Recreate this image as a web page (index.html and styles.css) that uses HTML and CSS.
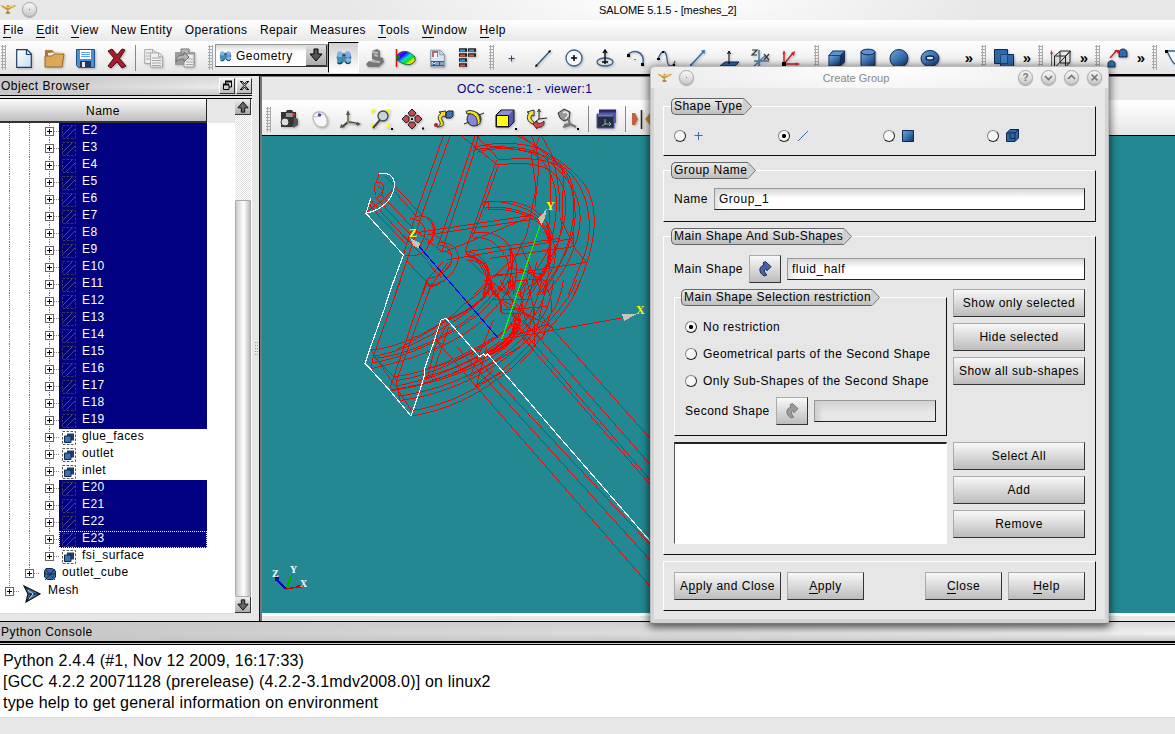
FILE: index.html
```html
<!DOCTYPE html>
<html lang="en">
<head>
<meta charset="utf-8">
<title>SALOME 5.1.5 - [meshes_2]</title>
<link rel="stylesheet" href="styles.css">
</head>
<body>
<svg class="defs" width="0" height="0">
  <defs>
    <linearGradient id="blue" x1="0" y1="0" x2="1" y2="1"><stop offset="0" stop-color="#6fa3dc"/><stop offset=".5" stop-color="#3a73b4"/><stop offset="1" stop-color="#14305a"/></linearGradient>
    <linearGradient id="sheet" x1="0" y1="0" x2="1" y2="1"><stop offset="0" stop-color="#fff"/><stop offset="1" stop-color="#c6dcf4"/></linearGradient>
    <linearGradient id="rain" x1="0" y1="0" x2="1" y2="1"><stop offset="0" stop-color="#f0f"/><stop offset=".3" stop-color="#20f"/><stop offset=".5" stop-color="#0dd"/><stop offset=".65" stop-color="#1d1"/><stop offset=".8" stop-color="#fe0"/><stop offset="1" stop-color="#f20"/></linearGradient>
    <symbol id="lamp" viewBox="0 0 16 12"><path d="M0 2l4 1 3 .3V2h2v1.200l5-1 2-.2-1 1.500-5 2.500-1.500 1v1.500l2 1H5l2-1v-1.500L3.500 5z" fill="#c8962c"/><path d="M4 3.700l5 .6 5-1.500" stroke="#f6e08a" fill="none"/><path d="M6 10h4" stroke="#6a4a14" fill="none"/></symbol>
    <symbol id="edge" viewBox="0 0 14 14"><path d="M.5.5h13v13H.5z" fill="none" stroke="#3c3c5a" stroke-dasharray="2.500 1.500"/><path d="M1 10L10 1M4 13L13 4" stroke="#4a4a88" fill="none"/></symbol>
    <symbol id="face" viewBox="0 0 14 14"><path d="M.5.5h13v13H.5z" fill="#fff" stroke="#555" stroke-dasharray="2.500 1.500"/><path d="M5 2.500h7v7H5z" fill="#1d3f6b"/><path d="M2.500 5h6.500v6.500h-6.500z" fill="#3a73b4" stroke="#13294a"/></symbol>
    <symbol id="molecule" viewBox="0 0 20 18"><path d="M3 3l5 1h4l5-1 2 6-2 7-4 1-3-3-3 3-4-1-2-7z" fill="#4386a8"/><circle cx="5" cy="5" r="3.500" fill="#7fb6dc"/><circle cx="14.500" cy="5" r="3.500" fill="#86a6ee"/><circle cx="5" cy="12.500" r="3.200" fill="#3f94b4"/><circle cx="15" cy="12.500" r="3.200" fill="#82b4d8"/><path d="M2 15c2 3 5 1 6-1M12 14c1 3 5 3 6 0M8 6h4" stroke="#173a52" stroke-width="1.500" fill="none"/></symbol>
    <symbol id="curl" viewBox="0 0 14 17"><path d="M5.500 16C0 13-1 6 5 4.500L4.500 1.500 7 .5 13 6 8.500 10.500 7.500 8C5 9 5.500 12 8.500 15z"/></symbol>
    <symbol id="cube" viewBox="0 0 20 20"><path d="M1.500 6.500L6 1.500h13v12.500l-5 4.500H1.500z" fill="#16345e"/><path d="M2.500 6.200L6.500 2.500h11.500l-4 3.700z" fill="#5b94d4"/><path d="M2.500 7.200h11v10.300h-11z" fill="url(#blue)"/></symbol>
    <symbol id="page" viewBox="0 0 16 19"><path d="M.7.700h10.300l4.300 4.300v13.300H.700z"/><path d="M10.500 1v4.500h4.500" fill="none"/></symbol>
  </defs>
</svg>

<div class="app">
  <header class="titlebar">
    <svg class="lamp" width="16" height="12"><use href="#lamp"/></svg>
    <span class="round"><i></i></span>
    <span class="caption">SALOME 5.1.5 - [meshes_2]</span>
  </header>

  <nav class="menu">
    <span><u>F</u>ile</span><span><u>E</u>dit</span><span><u>V</u>iew</span><span>New Entity</span><span>Operations</span><span>Repair</span><span>Measures</span><span><u>T</u>ools</span><span><u>W</u>indow</span><span><u>H</u>elp</span>
  </nav>

  <div class="toolbar">
    <i class="grip first"></i>
    <svg class="tb" viewBox="0 0 31 32"><g transform="translate(8 7)" fill="url(#sheet)" stroke="#1c3f6c" stroke-width="1.200"><use href="#page" width="16" height="19"/></g></svg>
    <svg class="tb" viewBox="0 0 31 32"><path d="M6 8h7l2 2h8v5H6z" fill="#a87a3c"/><path d="M9 11l14-1v8H9z" fill="#f4f0e4"/><path d="M6 14h7l2-2h10l-2 13H6z" fill="#dca858" stroke="#966a30"/></svg>
    <svg class="tb" viewBox="0 0 31 32"><path d="M6.500 7.500h18v18h-16l-2-2z" fill="#4d8fd2" stroke="#1f4f8c"/><path d="M10 8h11v9H10z" fill="#fff"/><path d="M11 10.500h9M11 12.500h9M11 14.500h9" stroke="#5aa0ee"/><path d="M10 19h11v6H10z" fill="#1b3864"/><path d="M12 20h3v5h-3z" fill="#e8e8e8"/></svg>
    <svg class="tb" viewBox="0 0 31 32"><path d="M7 9l4-2 5 6 5-6 3 1-5.500 8.500L25 24l-4 2-5-6-6 6-3-2 6-8z" fill="#a81d2c" stroke="#4c0a12"/></svg>
    <i class="rule"></i>
    <svg class="tb dim" viewBox="0 0 31 32"><g fill="#f2f2f2" stroke="#888"><use href="#page" x="6" y="7" width="13" height="15"/><use href="#page" x="12" y="10" width="13" height="16"/></g><path d="M8 11h5M8 14h4M8 17h4M14 16h9M14 18.500h9M14 21h9M14 23.500h9" stroke="#999"/></svg>
    <svg class="tb dim" viewBox="0 0 31 32"><path d="M6 10h20v13H6z" fill="#8d8d8d"/><path d="M12 7h8v5h-8z" fill="#aaa" stroke="#666"/><path d="M15 12h10v13H15z" fill="#eee" stroke="#888"/><path d="M7 20c0-6 4-7 8-7v-3l5 5-5 5v-3c-3 0-5 0-8 3z" fill="#aaa" stroke="#555"/><path d="M19 17h5M17 20h7M17 22.500h7" stroke="#999"/></svg>
    <i class="grip g1"></i>
    <div class="combo"><svg width="13" height="12"><use href="#molecule"/></svg><span>Geometry</span><b><svg width="14" height="14" viewBox="0 0 14 14"><path d="M5 1h4v5h4L7 13 1 6h4z" fill="#555" stroke="#000"/></svg></b></div>
    <span class="pressed"><svg width="18" height="15"><use href="#molecule"/></svg></span>
    <svg class="tb" viewBox="0 0 31 32"><path d="M7 22l3-3 4 1 2-2-3-1V9l5-2 3 2v6l3 1 1 4-5 5H9z" fill="#777"/><path d="M13 10l6 1M12 19l9 1M15 13l4 1" stroke="#bbb" stroke-width="2"/></svg>
    <svg class="tb" viewBox="0 0 31 32"><path d="M7 13C13 7 19 9 25 15v4c-5 6-11 4-18-1z" fill="url(#rain)" stroke="#164"/><path d="M6.500 7v18" stroke="#d11" stroke-width="1.500"/><path d="M6 15h4" stroke="#080" stroke-width="3"/></svg>
    <svg class="tb" viewBox="0 0 31 32"><g fill="#dbe4ee" stroke="#8292a4"><use href="#page" x="9" y="7" width="15" height="19"/></g><path d="M11 9h6v6h-6z" fill="#b66"/><path d="M13 11h3v5h-3z" fill="#fff"/><path d="M10 19h13v5H10z" fill="#2c5c94"/><path d="M11 23v-3l2 2 2-2v3M17 20v3M20 20v3M22 20v3" stroke="#dfe9f5" fill="none"/></svg>
    <svg class="tb" viewBox="0 0 31 32"><path d="M7 8h8M7 13h8M7 18h8M7 23h8M16 8h8M16 13h8" stroke="#222" stroke-width="3.600"/><path d="M8 8.500h5M17 8.500h5M8 18.500h5" stroke="#3a9be0" stroke-width="1.800"/><path d="M8 13.500h5M17 13.500h5M8 23.500h5" stroke="#e0504a" stroke-width="1.800"/></svg>
    <i class="grip g2"></i>
    <svg class="tb" viewBox="0 0 31 32"><path d="M15.500 13.500v6M12.500 16.500h6" stroke="#334b78"/></svg>
    <svg class="tb" viewBox="0 0 31 32"><path d="M9 24L23 9" stroke="#2c568c" stroke-width="1.300"/><path d="M8 25l3-1-2-2zM24 8l-3 1 2 2z"/></svg>
    <svg class="tb" viewBox="0 0 31 32"><circle cx="16" cy="16" r="8" fill="#f6f8fc" stroke="#35608f" stroke-width="1.300"/><path d="M16 13v6M13 16h6" stroke="#000" stroke-width="1.500"/></svg>
    <svg class="tb" viewBox="0 0 31 32"><ellipse cx="16" cy="20" rx="8" ry="4" fill="none" stroke="#35608f" stroke-width="1.300"/><path d="M16 9v13M14 11l2-3 2 3M13 20h6" stroke="#000" stroke-width="1.300" fill="none"/></svg>
    <svg class="tb" viewBox="0 0 31 32"><path d="M8 13c4-6 17-5 15 9" stroke="#35608f" stroke-width="1.500" fill="none"/><path d="M7 12h3v3H7zM21 21h3v3h-3zM14.500 17h1v1h-1z"/></svg>
    <svg class="tb" viewBox="0 0 31 32"><path d="M7 17c4-10 8-10 9 0s6 8 8 2" stroke="#35608f" stroke-width="1.300" fill="none"/><path d="M6 16h3v2H6zM11 9h2v2h-2zM22 22h2v2h-2z"/></svg>
    <svg class="tb" viewBox="0 0 31 32"><path d="M9 23L22 9" stroke="#2f6fb0" stroke-width="1.500"/><path d="M19 8.500l4-.5-.5 4z" fill="#2f6fb0"/><path d="M8 22h2v2H8z" fill="#2f6fb0"/></svg>
    <svg class="tb" viewBox="0 0 31 32"><path d="M7 24l5-4h14l-4 4z" fill="#2d67a8" stroke="#122c50"/><path d="M16 10v12M14.500 12l1.500-3 1.500 3" stroke="#000" fill="none"/></svg>
    <svg class="tb" viewBox="0 0 31 32"><path d="M8 8h5l-5 5h5M20 12l5 6M25 12l-5 6" stroke="#333" fill="none" stroke-width="1.200"/><path d="M15 8v18M10 19h15M9 25l12-11" stroke="#4a78a8" stroke-width="1.500"/></svg>
    <svg class="tb" viewBox="0 0 31 32"><path d="M9 22V11M9 22h13M9 22l9-11" stroke="#c22" stroke-width="1.500"/><path d="M7.500 12L9 8l1.500 4zM21 20.500l4 1.500-4 1.500zM16 11l4-2-1 5z" fill="#c22"/><path d="M7 20h4v4H7z"/></svg>
    <i class="grip g3"></i>
    <svg class="tb" viewBox="0 0 31 32"><use href="#cube" x="6" y="7" width="19" height="19"/></svg>
    <svg class="tb" viewBox="0 0 31 32"><path d="M9 10v13c1 4 13 4 14 0V10z" fill="url(#blue)" stroke="#12284a"/><ellipse cx="16" cy="10" rx="7" ry="2.800" fill="#5b93d2" stroke="#12284a"/></svg>
    <svg class="tb" viewBox="0 0 31 32"><circle cx="16" cy="16.500" r="9" fill="url(#blue)" stroke="#12284a"/></svg>
    <svg class="tb" viewBox="0 0 31 32"><ellipse cx="16" cy="16.500" rx="9" ry="8" fill="url(#blue)" stroke="#12284a"/><ellipse cx="16" cy="16" rx="4" ry="2" fill="#dfe6ee" stroke="#12284a" stroke-width="1.500"/></svg>
    <span class="more m1">»</span>
    <i class="grip g4"></i>
    <svg class="tb" viewBox="0 0 31 32"><path d="M6.500 7.500h13v5h6v14h-13v-5h-6z" fill="#2d69ab" stroke="#12284a"/><path d="M12.500 21.500v-9h7v9z" fill="#3f7fc2" stroke="#1d4578"/></svg>
    <span class="more m2">»</span>
    <i class="grip g4"></i>
    <svg class="tb" viewBox="0 0 31 32"><path d="M9.500 14h11v12h-11zM9.500 14l6-5h10l-5 5M25 9v11l-5 6M15 9v12h10M9.500 26l16-17" stroke="#222" fill="none"/><path d="M6.500 25V11" stroke="#d33"/><path d="M5 12l1.500-4L8 12z" fill="#d33"/></svg>
    <span class="more m2">»</span>
    <i class="grip g4"></i>
    <svg class="tb" viewBox="0 0 31 32"><path d="M6 25v-4c1-3 6-3 7 0v4zM17 15v-5c1-4 7-4 8 0v5z" fill="#2d69ab" stroke="#12284a"/><path d="M8 16l7-8" stroke="#c22" stroke-width="1.500"/><path d="M12 8h5v4z" fill="#c22"/></svg>
    <span class="more m2">»</span>
    <i class="grip g4"></i>
    <svg class="tb" viewBox="0 0 31 32"><path d="M8 9h20l-3 14c-9 3-12-3-17-14z" fill="#f5f7fb" stroke="#35608f" stroke-width="1.300"/><path d="M6 8h3v3H6z"/></svg>
  </div>

  <main class="work">
    <section class="browser">
      <div class="docktitle"><span>Object Browser</span>
        <b class="sq"><svg width="11" height="11" viewBox="0 0 11 11"><path d="M3.500 4V1.500h6V7H7" stroke="#000" fill="none"/><path d="M3 1.500h7M1 4.500h6" stroke="#000" stroke-width="2"/><path d="M1.500 4.500h5.500v5H1.500z" fill="none" stroke="#000"/></svg></b>
        <b class="sq"><svg width="11" height="11" viewBox="0 0 11 11"><path d="M1 1.500h2.500L5.500 4l2-2.500H10M1 9.500h2.500l2-2.500 2 2.500H10M2 2l3 3.500L2 9M9 2L6 5.500 9 9" stroke="#000" fill="none"/></svg></b>
      </div>
      <div class="treewrap">
        <div class="tree">
          <div class="thead">Name</div>
          <ul>
            <li class="sel"><i></i><i></i><i class="p"></i><span><svg><use href="#edge"/></svg>E2</span></li>
            <li class="sel"><i></i><i></i><i class="p"></i><span><svg><use href="#edge"/></svg>E3</span></li>
            <li class="sel"><i></i><i></i><i class="p"></i><span><svg><use href="#edge"/></svg>E4</span></li>
            <li class="sel"><i></i><i></i><i class="p"></i><span><svg><use href="#edge"/></svg>E5</span></li>
            <li class="sel"><i></i><i></i><i class="p"></i><span><svg><use href="#edge"/></svg>E6</span></li>
            <li class="sel"><i></i><i></i><i class="p"></i><span><svg><use href="#edge"/></svg>E7</span></li>
            <li class="sel"><i></i><i></i><i class="p"></i><span><svg><use href="#edge"/></svg>E8</span></li>
            <li class="sel"><i></i><i></i><i class="p"></i><span><svg><use href="#edge"/></svg>E9</span></li>
            <li class="sel"><i></i><i></i><i class="p"></i><span><svg><use href="#edge"/></svg>E10</span></li>
            <li class="sel"><i></i><i></i><i class="p"></i><span><svg><use href="#edge"/></svg>E11</span></li>
            <li class="sel"><i></i><i></i><i class="p"></i><span><svg><use href="#edge"/></svg>E12</span></li>
            <li class="sel"><i></i><i></i><i class="p"></i><span><svg><use href="#edge"/></svg>E13</span></li>
            <li class="sel"><i></i><i></i><i class="p"></i><span><svg><use href="#edge"/></svg>E14</span></li>
            <li class="sel"><i></i><i></i><i class="p"></i><span><svg><use href="#edge"/></svg>E15</span></li>
            <li class="sel"><i></i><i></i><i class="p"></i><span><svg><use href="#edge"/></svg>E16</span></li>
            <li class="sel"><i></i><i></i><i class="p"></i><span><svg><use href="#edge"/></svg>E17</span></li>
            <li class="sel"><i></i><i></i><i class="p"></i><span><svg><use href="#edge"/></svg>E18</span></li>
            <li class="sel"><i></i><i></i><i class="p"></i><span><svg><use href="#edge"/></svg>E19</span></li>
            <li><i></i><i></i><i class="p"></i><span><svg><use href="#face"/></svg>glue_faces</span></li>
            <li><i></i><i></i><i class="p"></i><span><svg><use href="#face"/></svg>outlet</span></li>
            <li><i></i><i></i><i class="p"></i><span><svg><use href="#face"/></svg>inlet</span></li>
            <li class="sel"><i></i><i></i><i class="p"></i><span><svg><use href="#edge"/></svg>E20</span></li>
            <li class="sel"><i></i><i></i><i class="p"></i><span><svg><use href="#edge"/></svg>E21</span></li>
            <li class="sel"><i></i><i></i><i class="p"></i><span><svg><use href="#edge"/></svg>E22</span></li>
            <li class="sel focus"><i></i><i></i><i class="p"></i><span><svg><use href="#edge"/></svg>E23</span></li>
            <li><i></i><i></i><i class="p end"></i><span><svg><use href="#face"/></svg>fsi_surface</span></li>
            <li class="lv2"><i></i><i class="p end"></i><span><svg viewBox="0 0 14 14"><path d="M3 1.500h6.500l3 2.500v6l-2.500 2.500H4.500l-3-2.500V4z" fill="#3568a4" stroke="#14294a"/><path d="M2 2l10 11M12 2L2 13M1 7h12" stroke="#14294a"/></svg>outlet_cube</span></li>
            <li class="lv1"><i class="p end"></i><span><svg viewBox="0 0 18 18"><path d="M1 1l16 8L3 17l2-8z" fill="#4a78b4" stroke="#111" stroke-width="1.200"/><path d="M1 1l8 7-5 8M5 9h12" stroke="#111" fill="none"/><path d="M5 5l5 4-4 5" stroke="#cde" fill="none"/></svg>Mesh</span></li>
          </ul>
        </div>
        <div class="scroll"><b class="up"><svg width="12" height="12" viewBox="0 0 14 14"><path d="M5 13h4V8h4L7 1 1 8h4z" fill="#666" stroke="#000"/></svg></b><i></i><b><svg width="12" height="12" viewBox="0 0 14 14"><path d="M5 1h4v5h4L7 13 1 6h4z" fill="#666" stroke="#000"/></svg></b></div>
      </div>
    </section>
    <div class="splitter"><i></i><i></i></div>

    <section class="view">
      <div class="vtitle"><span>OCC scene:1 - viewer:1</span></div>
      <div class="vbar">
        <i class="grip v"></i>
        <svg class="tb" viewBox="0 0 31 32"><path d="M8 9h5l1-2h5l1 2h3v12l-4 3H8z" fill="#333"/><circle cx="12" cy="19" r="4" fill="#ddd" stroke="#333"/><path d="M13 10h7v4h-7z" fill="#999"/><path d="M19 11.500h3" stroke="#e33" stroke-width="2"/><path d="M21 14l4 2v6l-5 3" fill="#555"/></svg>
        <svg class="tb" viewBox="0 0 31 32"><path d="M9 15c0-7 9-8 12-3 4 5 3 12-3 12-5 0-8-3-9-9z" fill="#f8f8f8" stroke="#bbb" stroke-width="1.300"/><path d="M10 14c4 0 8-2 10-4M14 8l2 4" stroke="#bbb" fill="none"/><circle cx="15.500" cy="12" r="1.700" fill="#35599a"/></svg>
        <svg class="tb" viewBox="0 0 31 32"><path d="M13 9v10l-6 5M13 19l11 2" stroke="#444" stroke-width="2" fill="none"/><path d="M13 10v10l8 1" stroke="#c9c08c" fill="none"/><path d="M11 12l2-5 2 5zM22 19l4 2-4 2zM6 21l-1 4 5-1z" fill="#555"/></svg>
        <svg class="tb" viewBox="0 0 31 32"><path d="M6 10V7h3M19 7h4v4M6 20v4h4M20 24h3v-4" stroke="#ff0" stroke-width="1.500" fill="none"/><path d="M7 25l7-8" stroke="#444" stroke-width="2"/><circle cx="17" cy="13" r="5" fill="#c5d7dc" stroke="#444" stroke-width="1.300"/><path d="M25 26h2" stroke="#000" stroke-width="2"/></svg>
        <svg class="tb" viewBox="0 0 31 32"><path d="M15 6l4 4-2 3h-4l-2-3zM15 26l4-4-2-3h-4l-2 3zM5 16l4-4 3 2v4l-3 2zM25 16l-4-4-3 2v4l3 2z" fill="#be4c52" stroke="#222"/><path d="M15 15v2M25 25.500h2" stroke="#111" stroke-width="2"/></svg>
        <svg class="tb" viewBox="0 0 31 32"><path d="M9 24c8 0 7-4 5-7-1-2 0-3 1-4l2 1 1-6-7 1 2 1c-4 4-3 6-1 9 1 3-1 4-3 5z" fill="#f3e11c" stroke="#333"/><path d="M18 10l2-2h5v5l-2 2h-5z" fill="#3b76b0" stroke="#123"/><circle cx="8" cy="22" r="2" fill="#b22"/></svg>
        <svg class="tb" viewBox="0 0 31 32"><circle cx="15" cy="16" r="7" fill="#8486d8" stroke="#223"/><path d="M5 21l5-2M20 12l5-2" stroke="#222"/><path d="M7 8.500l3-1c8 0 12 5 11 13l-3 2c1-7-1-11-8-12l-2 .5z" fill="#f1df22" stroke="#333"/></svg>
        <svg class="tb" viewBox="0 0 31 32"><path d="M6 12l5-5h13v12l-5 5H6z" fill="#555cae" stroke="#111"/><path d="M6.500 12.500h12v11h-12z" fill="#ffff18" stroke="#111"/><path d="M7 12l5-4.500h11l-4 4.500z" fill="#8a90d8"/><path d="M25 26h2" stroke="#000" stroke-width="2"/></svg>
        <svg class="tb" viewBox="0 0 31 32"><path d="M12 21c-6-2-7-7-4-11l-2-1 7-2v6l-2-1c-2 3-1 5 2 7z" fill="#f2e13a" stroke="#333"/><path d="M12 21l4-3v2c3 1 5 0 7-2 1 5-3 7-7 6v2z" fill="#d5484c" stroke="#522"/><path d="M18 8v8l8-1M18 16l-4 3M16.500 9L18 6l1.500 3" stroke="#222" fill="none"/></svg>
        <svg class="tb" viewBox="0 0 31 32"><path d="M6 10l6-4 6 3-1 7-5 2-4-3z" fill="#999" stroke="#333"/><path d="M11 10a3 3 0 1 1 2 5" stroke="#eee" fill="none" stroke-width="1.500"/><path d="M16 14l2 8M12 22l6-1 6 3M11 24l7-2" stroke="#777" stroke-width="2.200" fill="none"/><path d="M25 26h2" stroke="#000" stroke-width="2"/></svg>
        <i class="rule vr"></i>
        <svg class="tb" viewBox="0 0 31 32"><path d="M8 7h17v13H8z" fill="#5358b0"/><path d="M8 8h17" stroke="#272a70" stroke-width="3"/><path d="M6 11h17v14H6z" fill="#242e3c" stroke="#5358b0"/><path d="M7 12.500h15" stroke="#7478d0" stroke-width="2"/><path d="M14 16v5l6 0M14 21l-3 2M18 19l2 2-2 2" stroke="#7db6c4" fill="none"/></svg>
        <i class="rule vr2"></i>
        <svg class="tb" viewBox="0 0 31 32"><path d="M5 10h3l3 6-3 6H5z" fill="#c4603c"/><path d="M14.500 7v19" stroke="#222" stroke-width="1.500"/><path d="M24 9l-6 7 6 7z" fill="#c89030"/></svg>
      </div>
      <svg class="scene" viewBox="0 0 913 477" shape-rendering="crispEdges">
        <!-- upper half of the wireframe -->
        <g class="wire" transform="translate(98 -1) scale(.33333)">
          <path d="M250 3L165 245L130 360M270 3L182 250L140 378L105 480M345 3L232 340M355 3L340 60L245 350M305 3L415 92M350 3L415 72M410 75L365 205L315 350M415 92L355 260L335 310M250 380L205 430L188 480M262 385L215 450L203 480"/>
          <path d="M338 40C380 20 520 15 570 60S610 100 607 230 560 400 500 480M340 46C400 30 520 40 545 75S600 150 585 260 530 400 470 480M350 52C420 28 560 45 600 95S650 200 635 280 590 410 535 480M375 32C450 40 520 30 560 75 620 120 665 180 660 260S600 440 550 480"/>
          <path d="M415 75C480 68 560 68 600 95S640 160 645 230 600 400 545 480M412 90C500 80 560 85 595 130S620 260 590 330 520 450 480 480"/>
          <path d="M475 3C560 50 640 100 675 150 720 220 712 340 640 480M485 3C560 60 610 90 640 125 690 190 705 290 665 380L625 480M545 3C560 30 575 60 600 100M540 3L515 60C520 130 535 150 520 200L500 300L440 420M515 3C550 80 530 130 525 215M560 60C580 130 570 210 565 300M580 75C600 160 600 210 598 230"/>
          <path d="M365 205C430 190 490 200 530 230S580 300 585 350 560 430 530 480M370 200C440 195 500 215 540 250M378 218C430 212 480 225 520 245S565 300 572 345 550 420 510 480M385 225C450 218 510 240 545 270 580 320 580 400 545 480M365 205L378 225M385 205L385 225"/>
          <path d="M175 292L520 240M200 300L540 250M260 375L640 310M320 350L600 310M390 370L640 335M395 425L680 382M255 350L500 250M600 250L645 340L680 382M640 290L640 335"/>
          <path d="M335 295C380 285 430 300 450 335S450 420 440 480M340 310C380 300 420 330 440 370S420 440 415 480M315 350C350 350 385 375 388 420L370 480M315 365C350 365 380 385 392 425L385 480M325 378C360 372 390 400 375 460M320 370L390 435L440 480M340 360L410 470"/>
          <path class="thick" d="M318 355C350 375 388 380 385 430L370 480M390 430L400 480M560 270C585 330 565 400 540 430"/>
          <path d="M395 440L440 475M500 430L470 475M450 400L555 420M445 440L540 432M470 410L460 480M510 390L490 480M530 380L510 480M570 310L560 400L520 450"/>
          <path d="M58 115L42 160L48 180M45 145C60 135 75 150 70 165L50 190M55 155C70 158 75 172 60 185M75 122L185 240M100 165L170 245M60 175L165 285M45 185L150 298M32 195L145 320M25 208L140 330M18 235C40 210 75 200 100 160M35 188C20 210 40 230 55 223"/>
          <path d="M165 245C205 235 225 260 225 290L205 330M182 243C215 245 230 280 215 320M150 250C190 255 215 285 175 340M130 300L200 375M160 280L245 350M215 290L270 340M140 378L210 450M135 360C170 370 210 350 205 320"/>
          <path d="M232 325C275 315 295 345 295 370S260 445 215 455L195 440M240 350C280 345 280 370 270 390S230 430 200 430M240 330C290 345 285 385 240 420M200 380L245 430M340 480L450 380M440 340C480 370 480 430 445 480M450 340L460 480M395 425C440 405 470 430 440 480M480 330L550 480M480 400L560 440"/>
        </g>
        <!-- lower half of the wireframe and the long ducts -->
        <g class="wire" transform="translate(98 144) scale(.33333)">
          <path d="M122 0L40 228L32 268M200 0L88 330M215 10L108 305M195 10L210 20L255 0M15 250L32 268M32 210L155 392M40 228L110 300M88 330L153 408M108 300L120 362M265 125L225 200L200 300M267 140L215 290M243 118L228 185M230 183L250 195"/>
          <path d="M32 210C130 205 270 120 300 85S375 40 385 0M40 228C150 215 270 130 310 105S385 40 395 0M45 235C180 220 300 140 350 95L430 10M32 250C180 225 310 140 370 90L450 0M32 266C220 225 330 165 400 90L470 0M110 210L300 100"/>
          <path d="M100 290C210 280 330 215 400 175S480 90 500 0M108 302C230 285 350 215 420 165S500 80 520 0M90 330C240 310 360 250 440 180S530 70 545 0M95 332C230 310 370 265 450 190S550 70 565 0M118 348C250 330 380 270 460 200S570 100 580 0M115 362C260 345 400 275 490 190S600 70 610 0M108 318C220 300 370 230 440 180"/>
          <path d="M155 392C300 370 430 285 510 190S630 60 650 0M153 408C310 385 440 290 520 200S640 65 662 0M200 265C280 250 350 215 400 170M195 290C280 270 350 235 420 185M215 300C320 275 420 215 480 150"/>
          <path class="thick" d="M260 120C300 105 350 80 385 35M375 0L420 60L425 100M385 225C440 205 475 165 480 115M380 218C440 190 465 160 468 110M455 100L480 125L450 170M200 295L215 290M370 50L395 20M395 215L450 170"/>
          <path d="M400 40L545 180M425 60L580 145M430 90L560 80M425 100L500 100M400 60L510 60M540 0C580 40 580 90 570 105L545 180M500 0L525 100L490 180M560 10L530 150M480 30L500 140M450 80L530 120M420 20L540 150M470 165L570 130M440 0L490 60L475 110M420 0L460 70M400 120L330 290M380 200L350 315M330 230L440 150M330 290L480 200M350 315L430 275M345 320L400 270M460 120L520 210L480 250M520 80L525 200"/>
          <path d="M425 178L790 113M230 183L870 918M290 200L870 840M345 230L870 793M450 130L870 613M460 120L870 600M490 120L870 553M540 105L870 475"/>
        </g>
        <g class="edge" transform="translate(98 -1) scale(.33333)">
          <path d="M58 115C95 112 105 130 103 155C95 200 60 225 18 235L130 360L86 480M18 235L32 190"/>
          <path d="M101 435L72 525L30 640L15 685L32 703L88 765L153 843L180 765L192 725L195 697L220 625L243 555L258 550L358 665L370 657L376 663L383 657L580 885L870 1218"/>
          <path class="bl" d="M178 335L415 610"/>
          <path class="gr" d="M540 270L425 613"/>
          <path class="cone" d="M560 222L535 250L545 270L555 250zM150 308L160 332L175 340L180 325zM785 538H830L793 557z"/>
        </g>
        <g class="axis"><text x="147" y="101">Z</text><text x="284" y="74">Y</text><text x="374" y="178">X</text></g>
        <path d="M24 453L14 443" stroke="#00b" stroke-width="2"/><path d="M13 441h4v4h-4z" fill="#00a"/><path d="M25 452L29 440" stroke="#0a0" stroke-width="2"/><path d="M24 453L41 450" stroke="#c00" stroke-width="1.500"/><path d="M35 450h5" stroke="#d00" stroke-width="3"/>
        <g class="axis w"><text x="10" y="441">Z</text><text x="28" y="437">Y</text><text x="38" y="451">X</text></g>
      </svg>
    </section>
  </main>

  <section class="console">
    <div class="docktitle">Python Console</div>
    <pre>Python 2.4.4 (#1, Nov 12 2009, 16:17:33)
[GCC 4.2.2 20071128 (prerelease) (4.2.2-3.1mdv2008.0)] on linux2
type help to get general information on environment</pre>
  </section>
  <footer></footer>
</div>

<div class="dialog">
  <div class="dtitle">
    <svg class="lamp" width="15" height="11"><use href="#lamp"/></svg>
    <span class="round"><i></i></span>
    <span class="dcap">Create Group</span>
    <span class="round"><b>?</b></span>
    <span class="round"><svg viewBox="0 0 15 15"><path d="M4 6l3.500 3.500L11 6"/></svg></span>
    <span class="round"><svg viewBox="0 0 15 15"><path d="M4 9l3.500-3.500L11 9"/></svg></span>
    <span class="round"><svg viewBox="0 0 15 15"><path d="M4.500 4.500l6 6M10.500 4.500l-6 6"/></svg></span>
  </div>
  <div class="dbody">
    <div class="group types">
      <div class="legend"><span>Shape Type</span><svg viewBox="0 0 9 17"><path d="M0 .5h1l7.500 8-7.500 8H0"/></svg></div>
      <div class="radios">
        <label><i class="radio"></i><svg width="12" height="12" viewBox="0 0 12 12"><path d="M5.500 2v8M1.500 5.500h8" stroke="#3a6ea8"/></svg></label>
        <label><i class="radio on"></i><svg width="12" height="12" viewBox="0 0 12 12"><path d="M1 11L11 1" stroke="#3a6ea8"/></svg></label>
        <label><i class="radio"></i><svg width="12" height="12" viewBox="0 0 12 12"><path d="M.5.5h11v11H.5z" fill="url(#blue)" stroke="#12284a"/></svg></label>
        <label><i class="radio"></i><svg width="13" height="13" viewBox="0 0 13 13"><path d="M.5 4L4 .5h8.500V9L9 12.500H.5z" fill="#2f66a6" stroke="#12284a"/><path d="M1 4h8v8M9 4l3.500-3.500M4 5v4.500h5" fill="none" stroke="#12284a"/></svg></label>
      </div>
    </div>
    <div class="group name">
      <div class="legend"><span>Group Name</span><svg viewBox="0 0 9 17"><path d="M0 .5h1l7.500 8-7.500 8H0"/></svg></div>
      <div class="row"><span>Name</span><div class="input">Group_1</div></div>
    </div>
    <div class="group main">
      <div class="legend"><span>Main Shape And Sub-Shapes</span><svg viewBox="0 0 9 17"><path d="M0 .5h1l7.500 8-7.500 8H0"/></svg></div>
      <div class="row shape"><span>Main Shape</span><div class="btn pick"><svg width="13" height="16" fill="#4863ae" stroke="#1a2140"><use href="#curl"/></svg></div><div class="input">fluid_half</div></div>
      <div class="cols">
        <div class="left">
          <div class="group inner">
            <div class="legend"><span>Main Shape Selection restriction</span><svg viewBox="0 0 9 17"><path d="M0 .5h1l7.500 8-7.500 8H0"/></svg></div>
            <label><i class="radio on"></i>No restriction</label>
            <label><i class="radio"></i>Geometrical parts of the Second Shape</label>
            <label><i class="radio"></i>Only Sub-Shapes of the Second Shape</label>
            <div class="row second"><span>Second Shape</span><div class="btn pick"><svg width="13" height="16" fill="#999" stroke="#777"><use href="#curl"/></svg></div><div class="input off"></div></div>
          </div>
          <div class="list"></div>
        </div>
        <div class="right">
          <div class="btn">Show only selected</div>
          <div class="btn">Hide selected</div>
          <div class="btn">Show all sub-shapes</div>
          <div class="btn gap">Select All</div>
          <div class="btn">Add</div>
          <div class="btn">Remove</div>
        </div>
      </div>
    </div>
    <div class="group actions">
      <div class="btn b1"><span>A<u>p</u>ply and Close</span></div>
      <div class="btn b2"><span><u>A</u>pply</span></div>
      <div class="btn b2 push"><span><u>C</u>lose</span></div>
      <div class="btn b2"><span><u>H</u>elp</span></div>
    </div>
  </div>
</div>
</body>
</html>
```
FILE: styles.css
```css
* { box-sizing: border-box; }
body { margin: 0; width: 1175px; height: 734px; overflow: hidden; background: #e7e7e7; color: #000; font: 12px/16px "Liberation Sans", Arial, sans-serif; letter-spacing: .5px; }
.defs { position: absolute; }
u { text-decoration: none; box-shadow: 0 1px 0 #000; display: inline-block; line-height: 14px; }
.app { display: flex; flex-direction: column; height: 734px; }

.titlebar { display: flex; align-items: center; height: 20px; background: radial-gradient(ellipse 330px 60px at 667px 0, #fff 0, #f3f3f3 50%, #e7e7e7 100%); }
.titlebar .lamp { flex: none; margin-top: -3px; }
.round { flex: none; display: flex; align-items: center; justify-content: center; width: 15px; height: 15px; border-radius: 50%; border: 1px solid #a6a6a6; background: linear-gradient(#f8f8f8, #c9c9c9); box-shadow: 0 1px 1px #aaa; }
.round i { width: 1px; height: 1px; background: #777; }
.titlebar .round { margin: -1px 0 0 6px; }
.caption { margin-left: 562px; font-size: 11px; letter-spacing: -.1px; }

.menu { display: flex; height: 21px; padding: 2px 0 0 3px; background: linear-gradient(#fff, #e8e8e8); gap: 12.4px; letter-spacing: .4px; white-space: nowrap; }

.toolbar { display: flex; height: 33px; align-items: center; background: linear-gradient(#fff, #e4e4e4); overflow: hidden; }
.tb { flex: none; width: 31px; height: 32px; filter: drop-shadow(1px 1px 1px rgba(0,0,0,.25)); }
.tb.dim { opacity: .85; }
.grip { flex: none; width: 5px; height: 25px; background: radial-gradient(circle, #aaa 1px, transparent 1.3px) 0 0 / 3px 3px; }
.grip.first { margin: 0 2px 0 1px; }
.grip.g1 { margin: 0 2px 0 8px; }
.grip.g2 { margin: 0 2px 0 6px; }
.grip.g3 { margin: 0 2px 0 8px; }
.grip.g4 { margin: 0 2px 0 6px; }
.rule { flex: none; width: 1px; height: 26px; margin: 0 2px 0 3px; background: #888; }
.combo { flex: none; display: flex; align-items: center; width: 113px; height: 23px; margin: -4px 0 0 0; padding-left: 3px; border: 1px solid #999; border-bottom-color: #333; background: linear-gradient(#d9d9d9, #fff 35%); }
.combo span { margin-left: 4px; flex: 1; letter-spacing: .5px; }
.combo b { width: 21px; height: 21px; display: flex; align-items: center; justify-content: center; background: linear-gradient(#ddd, #aaa); border-right: 1px solid #333; border-bottom: 1px solid #333; }
.pressed { flex: none; width: 31px; height: 31px; display: flex; align-items: center; justify-content: center; border: 1px solid #000; border-right-color: #fff; border-bottom-color: #fff; background: linear-gradient(#d0d0d0, #fff); }
.more { flex: none; font: bold 15px/20px "Liberation Sans", sans-serif; letter-spacing: 0; width: 10px; text-align: center; }
.more.m1 { margin-left: 19px; }
.more.m1 + .grip { margin-left: 7px; }
.more.m2 { margin-left: 3px; }

.work { display: flex; height: 547px; border-top: 2px solid #000; background: #e7e7e7; }
.browser { width: 252px; display: flex; flex-direction: column; }
.docktitle { flex: none; display: flex; align-items: center; height: 19px; padding-left: 1px; gap: 1px; background: linear-gradient(90deg, #c6c6c6, transparent), linear-gradient(#d8d8d8, #f0f0f0 60%, #c8c8c8); }
.docktitle span { flex: 1; }
.sq { width: 16px; height: 16px; display: flex; align-items: center; justify-content: center; background: linear-gradient(#eee, #bbb); border: 1px solid #fff; border-right-color: #333; border-bottom-color: #333; }
.treewrap { display: flex; height: 519px; border-top: 1px solid #000; box-shadow: inset 0 2px #e7e7e7, inset 0 3px #000; padding-top: 3px; background: #fff; border-bottom: 1px solid #ddd; }
.tree { width: 235px; overflow: hidden; }
.thead { height: 24px; width: 207px; line-height: 24px; text-align: center; background: linear-gradient(#fbfbfb, #bfbfbf); border-right: 1px solid #222; border-bottom: 2px solid #333; box-shadow: 28px 0 #e7e7e7; }
.tree ul { list-style: none; margin: 0; padding: 0; }
.tree li { display: flex; height: 17px; width: 207px; line-height: 15px; }
.tree li i { width: 20px; background: repeating-linear-gradient(#777 0 1px, transparent 1px 2px) 9px 0 / 1px 100% no-repeat; }
.tree li i.p { width: 19px; background: linear-gradient(#000, #000) 7px 8px / 5px 1px no-repeat, linear-gradient(#000, #000) 9px 6px / 1px 5px no-repeat, linear-gradient(#fff, #fff) 6px 5px / 7px 7px no-repeat, linear-gradient(#666, #666) 5px 4px / 9px 9px no-repeat, repeating-linear-gradient(90deg, #888 0 1px, transparent 1px 2px) 14px 8px / 5px 1px no-repeat, repeating-linear-gradient(#777 0 1px, transparent 1px 2px) 9px 0 / 1px 100% no-repeat; }
.tree li i.end { background-size: 5px 1px, 1px 5px, 7px 7px, 9px 9px, 5px 1px, 1px 8px; }
.tree li span { flex: 1; display: flex; padding-left: 3px; letter-spacing: .4px; }
.tree li svg { width: 14px; height: 14px; margin: 2px 6px 0 0; }
.tree .sel span { background: #000080; color: #fff; }
.tree .focus span { outline: 1px dotted #ffff9a; outline-offset: -1px; }
.tree .lv2 span { padding-left: 4px; }
.tree .lv2 svg { margin-right: 5px; }
.tree .lv1 { padding-top: 1px; height: 24px; }
.tree .lv1 span { padding-left: 4px; }
.tree .lv1 svg { width: 18px; height: 18px; margin: 2px 7px 0 0; }
.scroll { width: 16px; display: flex; flex-direction: column; background: repeating-conic-gradient(#fff 0 25%, #e0e0e0 0 50%) 0 0 / 2px 2px; }
.scroll b { height: 16px; display: flex; align-items: center; justify-content: center; background: linear-gradient(#eee, #aaa); border-right: 1px solid #333; border-bottom: 1px solid #333; }
.scroll i { margin-top: 85px; flex: 1; background: linear-gradient(90deg, #ccc, #fff 55%, #bbb); border: 1px solid #aaa; border-radius: 1px; }
.splitter { flex: none; width: 10px; display: flex; align-items: center; justify-content: center; gap: 1px; border-right: 2px solid #777; box-shadow: inset -1px 0 #111; }
.splitter i { width: 1px; height: 14px; background: repeating-linear-gradient(#999 0 1px, transparent 1px 3px); }
.view { flex: 1; display: flex; flex-direction: column; border-top: 1px solid #777; min-width: 0; }
.view::after { content: ""; height: 3px; background: #fff; }
.vtitle { height: 24px; padding-left: 1px; line-height: 25px; border-bottom: 1px solid #fff; color: #000080; letter-spacing: .36px; }
.vtitle span { margin-left: 194px; }
.vbar { display: flex; align-items: center; height: 35px; background: linear-gradient(#fff, #e6e6e6); border-bottom: 1px solid #000; overflow: hidden; padding-top: 2px; }
.grip.v { margin: 0 2px 0 4px; }
.rule.vr { margin: 0 2px 0 5px; }
.rule.vr2 { margin: 0 1px 0 3px; }
.scene { display: block; flex: none; width: 913px; height: 477px; background: #238892; }
.wire { fill: none; stroke: #f00; stroke-width: 3; }
.wire .thick { stroke-width: 6; }
.edge { fill: none; stroke: #fff; stroke-width: 3.4; }
.bl { stroke: #00e; }
.gr { stroke: #0f0; }
.cone { fill: #c4c4b8; stroke: none; }
.axis { font: bold 12px "Liberation Serif", serif; fill: #ff0; letter-spacing: 0; }
.axis.w { font-size: 10px; fill: #fff; }

.console { border-top: 1px solid #000; height: 96px; display: flex; flex-direction: column; background: #fff; }
.console .docktitle { padding-top: 1px; }
.console pre { margin: 0; padding: 7px 3px 0; flex: 1; border-top: 2px solid #000; box-shadow: inset 0 1px #ccc, inset 0 2px #000; font: 16px/21px "Liberation Sans", Arial, sans-serif; letter-spacing: .19px; }
footer { flex: 1; background: #e7e7e7; border-top: 1px solid #ddd; }

.dialog { position: absolute; left: 650px; top: 66px; width: 459px; height: 558px; border: 1px solid #bbb; border-bottom-color: #777; border-radius: 5px 5px 3px 3px; background: #e6e6e6; box-shadow: inset 3px 0 #d4d4d2, inset -3px 0 #d4d4d2, inset 0 -4px #d4d4d2, 0 2px 9px 1px rgba(0,0,0,.65); }
.dtitle { display: flex; align-items: center; height: 21px; padding: 0 6px; border-radius: 4px 4px 0 0; background: radial-gradient(ellipse 260px 50px at 50% 0, #fff, #e9e9e9); }
.dtitle .round { margin-left: 8px; color: #777; }
.dtitle .lamp { margin-top: -1px; }
.dtitle .round:nth-child(2) { margin-left: 7px; }
.dtitle .round b { font-size: 10px; letter-spacing: 0; }
.round svg { width: 15px; height: 15px; flex: none; fill: none; stroke: #777; stroke-width: 1.700; }
.dcap { flex: 1; text-align: center; font-size: 11px; letter-spacing: 0; color: #888; padding-left: 8px; }
.dbody { padding: 18px 12px 0; }
.group { border: 1px solid #fff; border-right: 1px solid #111; border-bottom: 1px solid #111; }
.legend { display: flex; width: max-content; height: 17px; margin: -9px 0 0 7px; line-height: 15px; }
.legend span { border: 1px solid #666; border-right: 0; border-radius: 5px 0 0 5px; padding-left: 2px; background: linear-gradient(#ececec, #bdbdbd); letter-spacing: .47px; }
.legend svg { width: 9px; height: 17px; fill: #d0d0d0; stroke: #777; }
.radio { flex: none; display: inline-block; width: 12px; height: 12px; border-radius: 50%; border: 1px solid #888; border-right-color: #222; border-bottom-color: #222; background: #f6f6f6; }
.radio.on { background: radial-gradient(circle, #000 1.800px, #f6f6f6 2.400px); }
.types { height: 50px; }
.radios { display: flex; margin: 14px 0 0 10px; }
.radios label { display: flex; align-items: center; width: 104.400px; gap: 7px; }
.name { margin-top: 14px; height: 52px; }
.row { display: flex; align-items: center; padding: 0 10px; white-space: nowrap; }
.name .row { margin-top: 9px; }
.input { flex: 1; height: 22px; padding: 2px 4px; border: 1px solid #999; border-right-color: #222; border-bottom: 1px solid #222; background: linear-gradient(90deg, rgba(210,210,210,.7), transparent 8px), linear-gradient(#d6d6d6, #fff 45%); }
.row > span { width: 69px; }
.name .row > span { width: 34px; }
.second.row > span { width: 85px; }
.name .row > .input { margin-left: 6px; }
.input.off { background: linear-gradient(90deg, #ccc, transparent 8px), linear-gradient(#d2d2d2, #e7e7e7 60%); }
.btn { display: flex; align-items: center; justify-content: center; height: 28px; padding-bottom: 1px; border: 1px solid #aaa; border-right-color: #333; border-bottom: 1px solid #333; background: linear-gradient(#f8f8f8, #bcbcbc); white-space: nowrap; }
.pick { width: 32px; flex: none; margin: 0 6px; }
.main { margin-top: 14px; height: 319px; }
.shape { margin-top: 10px; }
.cols { display: flex; margin: 6px 10px 0; gap: 6px; }
.left { width: 273px; }
.inner { margin-top: 8px; height: 139px; }
.inner label { display: flex; align-items: center; height: 27px; padding-left: 10px; gap: 6px; letter-spacing: .47px; }
.inner .legend { margin-bottom: 7px; margin-left: 6px; }
.second { margin-top: 3px; }
.list { margin-top: 6px; height: 102px; background: #fff; border: 1px solid #555; border-top: 2px solid #222; border-right-color: #fff; border-bottom-color: #fff; }
.right { width: 132px; display: flex; flex-direction: column; gap: 6px; }
.gap { margin-top: 51px; }
.actions { margin-top: 6px; height: 50px; display: flex; align-items: center; padding: 0 10px; gap: 6px; }
.b1 { width: 107px; }
.b2 { width: 77px; }
.push { margin-left: auto; }
```
